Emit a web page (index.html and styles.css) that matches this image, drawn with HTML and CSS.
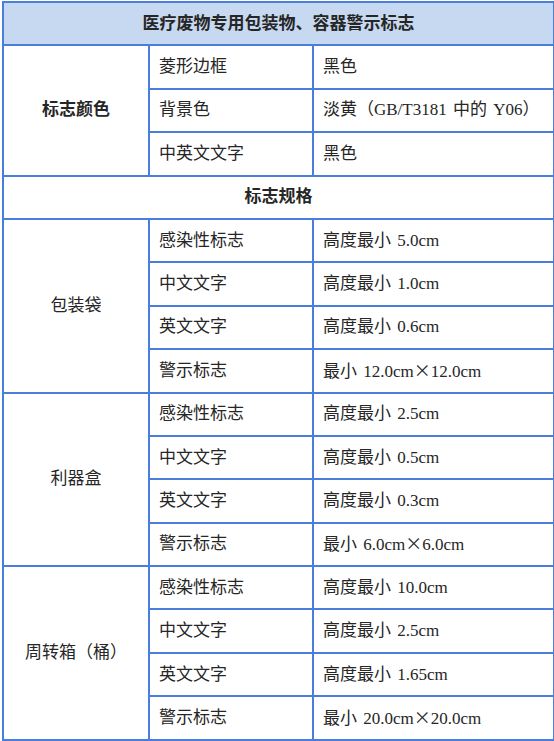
FILE: index.html
```html
<!DOCTYPE html>
<html lang="zh-CN">
<head>
<meta charset="utf-8">
<title>医疗废物专用包装物、容器警示标志</title>
<link rel="stylesheet" href="styles.css">
</head>
<body>
<table class="spec">
  <colgroup>
    <col class="c1"><col class="c2"><col class="c3">
  </colgroup>
  <tbody>
    <tr class="head"><th colspan="3">医疗废物专用包装物、容器警示标志</th></tr>
    <tr><th rowspan="3" class="group bold">标志颜色</th><td>菱形边框</td><td>黑色</td></tr>
    <tr><td>背景色</td><td>淡黄（GB/T3181 中的 Y06）</td></tr>
    <tr><td>中英文文字</td><td>黑色</td></tr>
    <tr class="sub"><th colspan="3">标志规格</th></tr>
    <tr><th rowspan="4" class="group">包装袋</th><td>感染性标志</td><td>高度最小 5.0cm</td></tr>
    <tr><td>中文文字</td><td>高度最小 1.0cm</td></tr>
    <tr><td>英文文字</td><td>高度最小 0.6cm</td></tr>
    <tr><td>警示标志</td><td>最小 12.0cm<span class="x">×</span>12.0cm</td></tr>
    <tr><th rowspan="4" class="group">利器盒</th><td>感染性标志</td><td>高度最小 2.5cm</td></tr>
    <tr><td>中文文字</td><td>高度最小 0.5cm</td></tr>
    <tr><td>英文文字</td><td>高度最小 0.3cm</td></tr>
    <tr><td>警示标志</td><td>最小 6.0cm<span class="x">×</span>6.0cm</td></tr>
    <tr><th rowspan="4" class="group">周转箱（桶）</th><td>感染性标志</td><td>高度最小 10.0cm</td></tr>
    <tr><td>中文文字</td><td>高度最小 2.5cm</td></tr>
    <tr><td>英文文字</td><td>高度最小 1.65cm</td></tr>
    <tr><td>警示标志</td><td>最小 20.0cm<span class="x">×</span>20.0cm</td></tr>
  </tbody>
</table>
</body>
</html>
```

FILE: styles.css
```css
html, body {
  margin: 0;
  padding: 0;
  background: #ffffff;
}

body {
  padding: 1px 0 0 2px;
}

.spec {
  border-collapse: collapse;
  width: 551px;
  table-layout: fixed;
  font-family: "Liberation Serif", "Noto Sans CJK SC", serif;
  font-size: 17px;
  color: #262626;
  word-spacing: 2px;
}

.c1 { width: 146px; }
.c2 { width: 164px; }
.c3 { width: 241px; }

.spec th,
.spec td {
  border: 2px solid #4a7edc;
  height: 41.4px;
  padding: 0 0 0 9px;
  line-height: 20px;
  text-align: left;
  vertical-align: middle;
  font-weight: normal;
}

.spec th[colspan],
.spec th.group {
  text-align: center;
  padding: 0;
}

.spec .head th {
  background: #c6d9f1;
  font-weight: bold;
}

.spec .sub th,
.spec th.bold {
  font-weight: bold;
}

.x {
  display: inline-block;
  width: 1em;
  text-align: center;
  font-family: "Noto Sans CJK SC", sans-serif;
  word-spacing: 0;
}
```
